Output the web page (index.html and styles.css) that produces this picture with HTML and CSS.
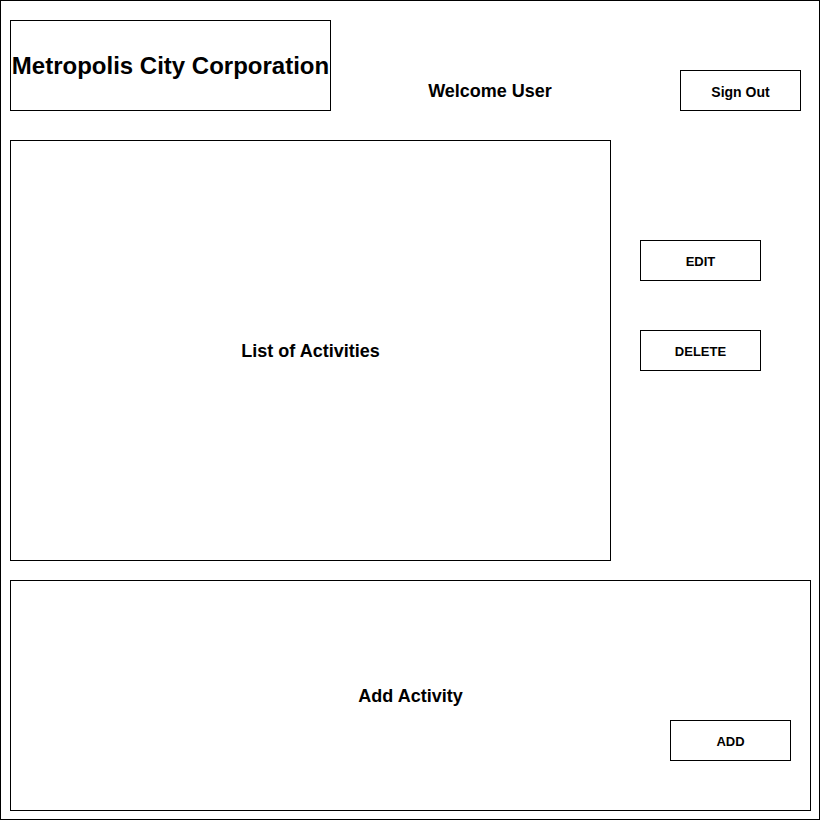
FILE: index.html
```html
<!DOCTYPE html>
<html lang="en">
<head>
  <meta charset="UTF-8">
  <title>Metropolis City Corporation</title>
  <link rel="stylesheet" href="styles.css">
</head>
<body>
  <div class="frame">
    <!-- Cabeçalho -->
    <div class="header">
      <div class="brand">Metropolis City Corporation</div>
      <div class="welcome">Welcome User</div>
      <button class="btn btn-signout">Sign Out</button>
    </div>

    <!-- Lista e ações -->
    <div class="main">
      <div class="list">List of Activities</div>
      <div class="actions">
        <button class="btn">EDIT</button>
        <button class="btn">DELETE</button>
      </div>
    </div>

    <!-- Adicionar atividade -->
    <div class="add-box">
      <div class="add-title">Add Activity</div>
      <button class="btn btn-add">ADD</button>
    </div>
  </div>
</body>
</html>
```

FILE: styles.css
```css
* {
  box-sizing: border-box;
}
body {
  margin: 0;
  background: #fff;
  font-family: "Liberation Sans", Arial, sans-serif;
  font-weight: bold;
  color: #000;
}
.frame {
  width: 820px;
  height: 820px;
  border: 1px solid #000;
  padding: 19px 0 0 9px;
}
.header {
  display: flex;
  align-items: flex-end;
}
.brand {
  width: 321px;
  height: 91px;
  border: 1px solid #000;
  display: flex;
  align-items: center;
  justify-content: center;
  font-size: 24px;
  white-space: nowrap;
}
.welcome {
  width: 160px;
  height: 41px;
  margin-left: 79px;
  padding-top: 2px;
  display: flex;
  align-items: center;
  justify-content: center;
  font-size: 18px;
}
.btn {
  width: 121px;
  height: 41px;
  border: 1px solid #000;
  background: #fff;
  font-family: inherit;
  font-weight: bold;
  font-size: 13px;
  color: #000;
  padding: 2px 0 0;
}
.btn-signout {
  margin-left: 110px;
  font-size: 14px;
}
.main {
  display: flex;
  margin-top: 29px;
}
.list {
  width: 601px;
  height: 421px;
  border: 1px solid #000;
  padding-top: 2px;
  display: flex;
  align-items: center;
  justify-content: center;
  font-size: 18px;
}
.actions {
  display: flex;
  flex-direction: column;
  gap: 49px;
  margin-left: 29px;
  padding-top: 100px;
}
.add-box {
  width: 801px;
  height: 231px;
  margin-top: 19px;
  border: 1px solid #000;
  display: grid;
}
.add-title,
.btn-add {
  grid-area: 1 / 1;
}
.add-title {
  align-self: center;
  justify-self: center;
  padding-top: 2px;
  font-size: 18px;
}
.btn-add {
  align-self: end;
  justify-self: end;
  margin: 0 19px 49px 0;
}
```
